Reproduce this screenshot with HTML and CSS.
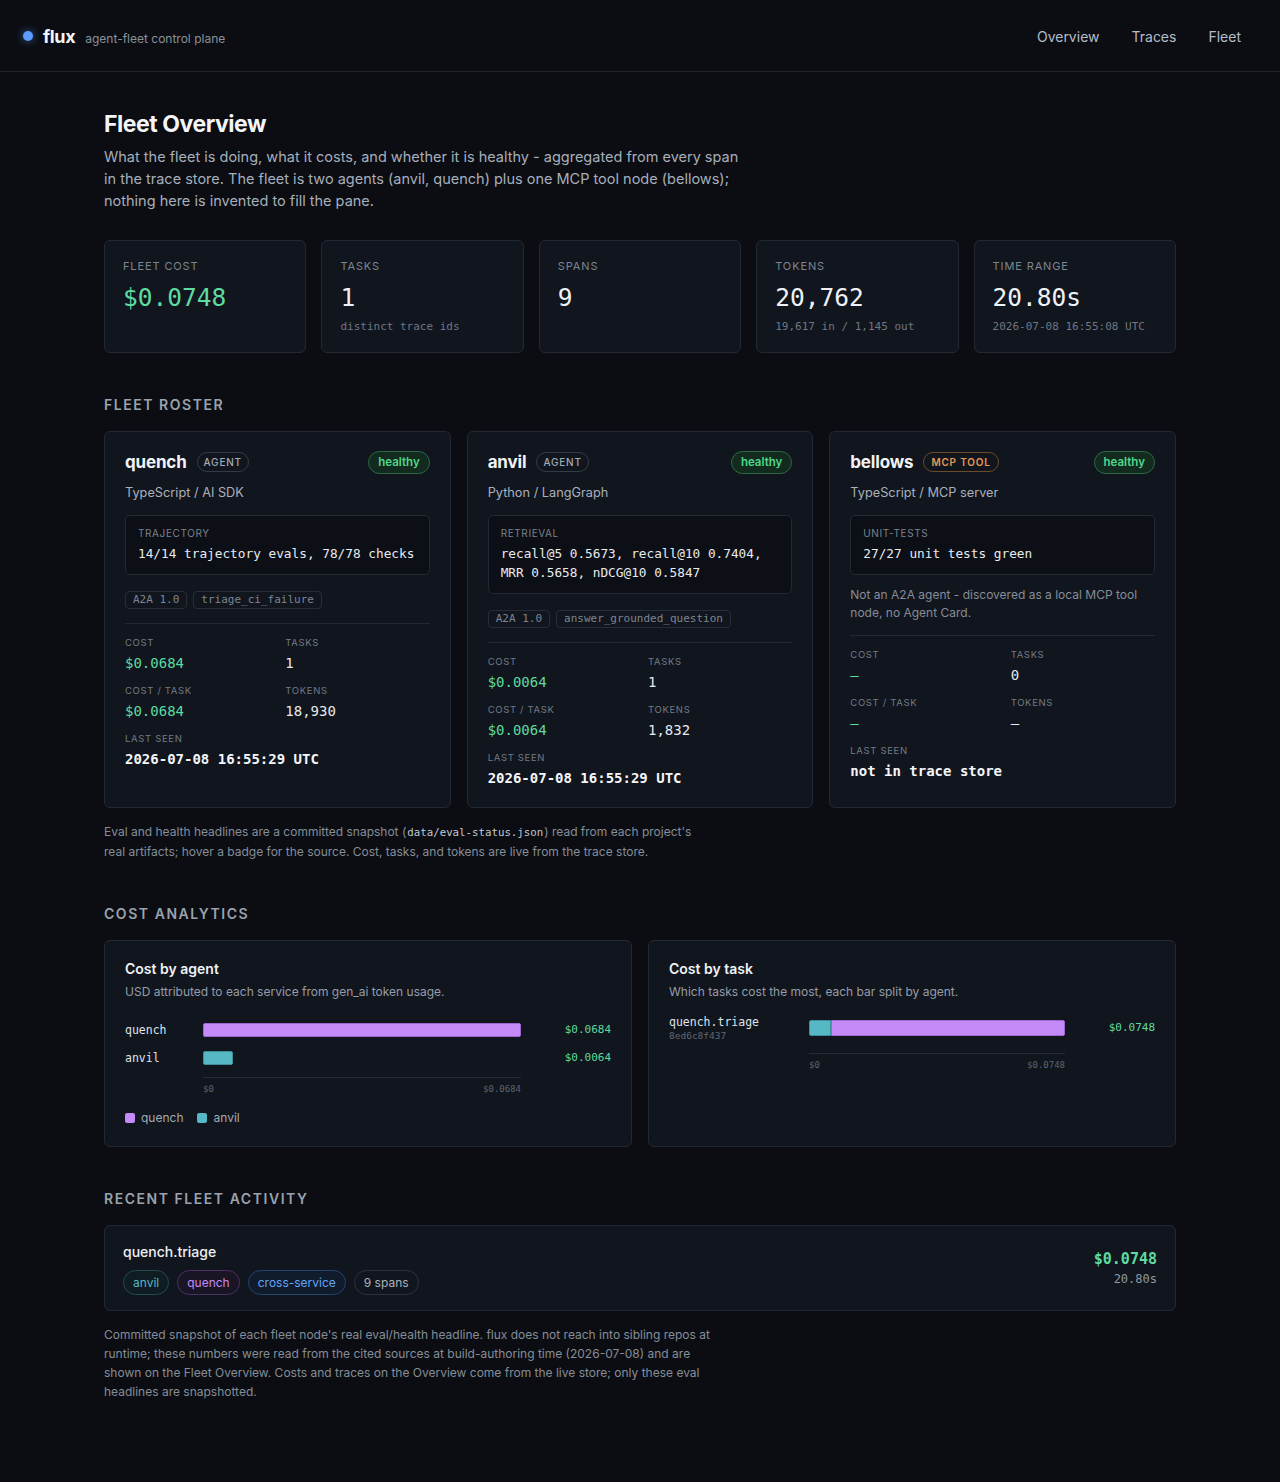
FILE: index.html
```html
<!DOCTYPE html>
<html>
<head>
    <title>flux - Fleet Overview</title>
    <link rel="stylesheet" href="styles.css">
</head>
<body>
    <header class="topbar">
        <div class="brand">
            <span class="brand-dot"></span>
            <span class="brand-name">flux</span>
            <span class="brand-sub">agent-fleet control plane</span>
        </div>
        <nav class="nav">
            <a href="#">Overview</a>
            <a href="#">Traces</a>
            <a href="#">Fleet</a>
        </nav>
    </header>

    <main class="page">
        <h1>Fleet Overview</h1>
        <p class="lede">What the fleet is doing, what it costs, and whether it is healthy - aggregated from every span in the trace store. The fleet is two agents (anvil, quench) plus one MCP tool node (bellows); nothing here is invented to fill the pane.</p>

        <div class="stats">
            <div class="stat">
                <div class="stat-label">Fleet cost</div>
                <div class="stat-value money">$0.0748</div>
            </div>
            <div class="stat">
                <div class="stat-label">Tasks</div>
                <div class="stat-value">1</div>
                <div class="stat-sub">distinct trace ids</div>
            </div>
            <div class="stat">
                <div class="stat-label">Spans</div>
                <div class="stat-value">9</div>
            </div>
            <div class="stat">
                <div class="stat-label">Tokens</div>
                <div class="stat-value">20,762</div>
                <div class="stat-sub">19,617 in / 1,145 out</div>
            </div>
            <div class="stat">
                <div class="stat-label">Time range</div>
                <div class="stat-value">20.80s</div>
                <div class="stat-sub">2026-07-08 16:55:08 UTC</div>
            </div>
        </div>

        <h2 class="section-title">Fleet roster</h2>
        <div class="roster">
            <div class="node-card">
                <div class="node-head">
                    <span class="node-name">quench</span>
                    <span class="kind">Agent</span>
                    <span class="health">healthy</span>
                </div>
                <div class="node-stack">TypeScript / AI SDK</div>
                <div class="eval-box">
                    <div class="eval-label">Trajectory</div>
                    <div class="eval-value">14/14 trajectory evals, 78/78 checks</div>
                </div>
                <div class="tags">
                    <span class="tag">A2A 1.0</span>
                    <span class="tag">triage_ci_failure</span>
                </div>
                <div class="node-stats">
                    <div><div class="cell-label">Cost</div><div class="cell-value money">$0.0684</div></div>
                    <div><div class="cell-label">Tasks</div><div class="cell-value">1</div></div>
                    <div><div class="cell-label">Cost / task</div><div class="cell-value money">$0.0684</div></div>
                    <div><div class="cell-label">Tokens</div><div class="cell-value">18,930</div></div>
                    <div class="wide"><div class="cell-label">Last seen</div><div class="cell-value strong">2026-07-08 16:55:29 UTC</div></div>
                </div>
            </div>

            <div class="node-card">
                <div class="node-head">
                    <span class="node-name">anvil</span>
                    <span class="kind">Agent</span>
                    <span class="health">healthy</span>
                </div>
                <div class="node-stack">Python / LangGraph</div>
                <div class="eval-box">
                    <div class="eval-label">Retrieval</div>
                    <div class="eval-value">recall@5 0.5673, recall@10 0.7404, MRR 0.5658, nDCG@10 0.5847</div>
                </div>
                <div class="tags">
                    <span class="tag">A2A 1.0</span>
                    <span class="tag">answer_grounded_question</span>
                </div>
                <div class="node-stats">
                    <div><div class="cell-label">Cost</div><div class="cell-value money">$0.0064</div></div>
                    <div><div class="cell-label">Tasks</div><div class="cell-value">1</div></div>
                    <div><div class="cell-label">Cost / task</div><div class="cell-value money">$0.0064</div></div>
                    <div><div class="cell-label">Tokens</div><div class="cell-value">1,832</div></div>
                    <div class="wide"><div class="cell-label">Last seen</div><div class="cell-value strong">2026-07-08 16:55:29 UTC</div></div>
                </div>
            </div>

            <div class="node-card">
                <div class="node-head">
                    <span class="node-name">bellows</span>
                    <span class="kind tool">MCP tool</span>
                    <span class="health">healthy</span>
                </div>
                <div class="node-stack">TypeScript / MCP server</div>
                <div class="eval-box">
                    <div class="eval-label">Unit-tests</div>
                    <div class="eval-value">27/27 unit tests green</div>
                </div>
                <p class="node-note">Not an A2A agent - discovered as a local MCP tool node, no Agent Card.</p>
                <div class="node-stats">
                    <div><div class="cell-label">Cost</div><div class="cell-value money">&ndash;</div></div>
                    <div><div class="cell-label">Tasks</div><div class="cell-value">0</div></div>
                    <div><div class="cell-label">Cost / task</div><div class="cell-value money">&ndash;</div></div>
                    <div><div class="cell-label">Tokens</div><div class="cell-value">&ndash;</div></div>
                    <div class="wide"><div class="cell-label">Last seen</div><div class="cell-value strong">not in trace store</div></div>
                </div>
            </div>
        </div>
        <p class="footnote">Eval and health headlines are a committed snapshot (<code>data/eval-status.json</code>) read from each project's real artifacts; hover a badge for the source. Cost, tasks, and tokens are live from the trace store.</p>

        <h2 class="section-title">Cost analytics</h2>
        <div class="charts">
            <div class="chart-card">
                <div class="chart-title">Cost by agent</div>
                <div class="chart-sub">USD attributed to each service from gen_ai token usage.</div>
                <div class="bars">
                    <div class="bar-row agent-row">
                        <span class="bar-label">quench</span>
                        <div class="bar-track"><div class="bar quench" style="width: 100%"></div></div>
                        <span class="bar-value">$0.0684</span>
                    </div>
                    <div class="bar-row agent-row">
                        <span class="bar-label">anvil</span>
                        <div class="bar-track"><div class="bar anvil" style="width: 9.36%"></div></div>
                        <span class="bar-value">$0.0064</span>
                    </div>
                    <div class="bar-row agent-row axis-row">
                        <span></span>
                        <div class="axis"><span>$0</span><span>$0.0684</span></div>
                        <span></span>
                    </div>
                </div>
                <div class="legend">
                    <span class="legend-item"><span class="swatch quench"></span>quench</span>
                    <span class="legend-item"><span class="swatch anvil"></span>anvil</span>
                </div>
            </div>

            <div class="chart-card">
                <div class="chart-title">Cost by task</div>
                <div class="chart-sub">Which tasks cost the most, each bar split by agent.</div>
                <div class="bars task-bars">
                    <div class="bar-row task-row">
                        <div class="task-label">
                            <div class="bar-label">quench.triage</div>
                            <div class="task-id">8ed6c8f437</div>
                        </div>
                        <div class="bar-track split">
                            <div class="bar anvil" style="width: 8.56%"></div>
                            <div class="bar quench" style="width: 91.44%"></div>
                        </div>
                        <span class="bar-value">$0.0748</span>
                    </div>
                    <div class="bar-row task-row axis-row">
                        <span></span>
                        <div class="axis"><span>$0</span><span>$0.0748</span></div>
                        <span></span>
                    </div>
                </div>
            </div>
        </div>

        <h2 class="section-title">Recent fleet activity</h2>
        <div class="activity">
            <div class="activity-main">
                <div class="activity-name">quench.triage</div>
                <div class="pills">
                    <span class="pill pill-anvil">anvil</span>
                    <span class="pill pill-quench">quench</span>
                    <span class="pill pill-cross">cross-service</span>
                    <span class="pill">9 spans</span>
                </div>
            </div>
            <div class="activity-side">
                <div class="activity-cost">$0.0748</div>
                <div class="activity-time">20.80s</div>
            </div>
        </div>

        <p class="footnote closing">Committed snapshot of each fleet node's real eval/health headline. flux does not reach into sibling repos at runtime; these numbers were read from the cited sources at build-authoring time (2026-07-08) and are shown on the Fleet Overview. Costs and traces on the Overview come from the live store; only these eval headlines are snapshotted.</p>
    </main>
</body>
</html>
```

FILE: styles.css
```css
body {
    margin: 0;
    background-color: #0b0d12;
    color: #e6e9ee;
    font-family: Inter, "Noto Sans", sans-serif;
}

.topbar {
    box-sizing: border-box;
    height: 72px;
    border-bottom: 1px solid #1f242d;
    display: flex;
    align-items: center;
    justify-content: space-between;
    padding: 1px 39px 0 23px;
}

.brand {
    display: flex;
    align-items: baseline;
}

.brand-dot {
    align-self: center;
    width: 10px;
    height: 10px;
    border-radius: 50%;
    background-color: #5b9dff;
    box-shadow: 0 0 8px rgba(91, 157, 255, 0.6);
    margin-right: 10px;
}

.brand-name {
    font-size: 18px;
    font-weight: 700;
    color: #f3f5f8;
    letter-spacing: -0.02em;
    margin-right: 10px;
}

.brand-sub {
    font-size: 12px;
    color: #8a919c;
}

.nav {
    display: flex;
    gap: 32px;
}

.nav a {
    color: #b5bdc9;
    text-decoration: none;
    font-size: 14px;
}

.page {
    max-width: 1072px;
    margin: 0 auto;
    padding: 37px 0 80px;
}

h1 {
    margin: 0;
    font-size: 23px;
    line-height: 30px;
    font-weight: 700;
    letter-spacing: -0.02em;
    color: #f3f5f8;
}

.lede {
    margin: 7px 0 0;
    max-width: 645px;
    font-size: 14.5px;
    line-height: 22px;
    color: #a7afbb;
}

.money {
    color: #5edba0 !important;
}

/* stat strip */

.stats {
    display: grid;
    grid-template-columns: repeat(5, 1fr);
    gap: 15px;
    margin-top: 28px;
}

.stat {
    background-color: #11151d;
    border: 1px solid #232934;
    border-radius: 6px;
    padding: 17px 18px 16px;
    min-height: 78px;
}

.stat-label {
    font-size: 11px;
    line-height: 16px;
    letter-spacing: 0.08em;
    text-transform: uppercase;
    color: #7d8592;
}

.stat-value {
    margin-top: 9px;
    font-family: "DejaVu Sans Mono", monospace;
    font-size: 24.5px;
    line-height: 30px;
    color: #eef1f5;
}

.stat-sub {
    margin-top: 6px;
    font-family: "DejaVu Sans Mono", monospace;
    font-size: 11px;
    line-height: 16px;
    color: #6f7783;
}

.section-title {
    margin: 42px 0 16px;
    font-size: 14px;
    line-height: 20px;
    font-weight: 600;
    letter-spacing: 0.11em;
    text-transform: uppercase;
    color: #9aa2ae;
}

/* roster */

.roster {
    display: grid;
    grid-template-columns: repeat(3, 1fr);
    gap: 16px;
}

.node-card {
    background-color: #11151d;
    border: 1px solid #232934;
    border-radius: 6px;
    padding: 18px 20px 19px;
}

.node-head {
    display: flex;
    align-items: center;
    height: 24px;
}

.node-name {
    font-size: 17px;
    font-weight: 700;
    color: #f1f3f6;
    letter-spacing: -0.01em;
}

.kind {
    margin-left: 10px;
    height: 18px;
    line-height: 18px;
    padding: 0 6px;
    border: 1px solid #343b47;
    border-radius: 10px;
    font-size: 10px;
    font-weight: 500;
    letter-spacing: 0.08em;
    text-transform: uppercase;
    color: #a3abb7;
}

.kind.tool {
    border-color: #6c4a2c;
    color: #e39a55;
    font-weight: 600;
    padding: 0 7px;
}

.health {
    margin-left: auto;
    height: 21px;
    line-height: 21px;
    padding: 0 9px;
    border: 1px solid #2a6a47;
    border-radius: 12px;
    background-color: #132a1f;
    font-size: 11.5px;
    font-weight: 600;
    color: #4fd98a;
}

.node-stack {
    margin-top: 9px;
    font-size: 12.75px;
    line-height: 20px;
    color: #a9b1bc;
}

.eval-box {
    margin-top: 12px;
    background-color: #0c0f15;
    border: 1px solid #232934;
    border-radius: 5px;
    padding: 10px 12px 11px;
}

.eval-label {
    font-size: 10px;
    line-height: 14px;
    letter-spacing: 0.06em;
    text-transform: uppercase;
    color: #7a828e;
}

.eval-value {
    margin-top: 4px;
    font-family: "DejaVu Sans Mono", monospace;
    font-size: 12.75px;
    line-height: 19px;
    color: #e8ebf0;
}

.tags {
    display: flex;
    gap: 6px;
    margin-top: 16px;
}

.tag {
    font-family: "DejaVu Sans Mono", monospace;
    font-size: 11px;
    line-height: 16px;
    padding: 0 7px;
    border: 1px solid #272d38;
    border-radius: 4px;
    color: #7d8592;
}

.node-note {
    margin: 11px 0 0;
    font-size: 12px;
    line-height: 18px;
    color: #858d99;
}

.node-stats {
    display: grid;
    grid-template-columns: 1fr 1fr;
    column-gap: 16px;
    row-gap: 11px;
    margin-top: 14px;
    padding-top: 12px;
    border-top: 1px solid #232934;
}

.node-note + .node-stats {
    margin-top: 13px;
}

.node-stats .wide {
    grid-column: span 2;
}

.cell-label {
    font-size: 9.5px;
    line-height: 14px;
    letter-spacing: 0.07em;
    text-transform: uppercase;
    color: #737b87;
}

.cell-value {
    margin-top: 3px;
    font-family: "DejaVu Sans Mono", monospace;
    font-size: 14px;
    line-height: 20px;
    color: #e6e9ee;
}

.cell-value.strong {
    color: #f4f6f9;
    font-weight: 600;
}

.footnote {
    margin: 14px 0 0;
    max-width: 600px;
    font-size: 12px;
    line-height: 19.3px;
    color: #858d99;
}

.footnote code {
    font-family: "DejaVu Sans Mono", monospace;
    font-size: 10.75px;
    margin: 0 1px;
    color: #c3c9d2;
}

/* charts */

.charts {
    display: grid;
    grid-template-columns: 1fr 1fr;
    gap: 16px;
}

.chart-card {
    background-color: #11151d;
    border: 1px solid #232934;
    border-radius: 6px;
    padding: 18px 20px 19px;
}

.chart-title {
    font-size: 14px;
    line-height: 20px;
    font-weight: 600;
    color: #eef1f5;
}

.chart-sub {
    margin-top: 4px;
    font-size: 12px;
    line-height: 18px;
    color: #959daa;
}

.bars {
    display: flex;
    flex-direction: column;
    gap: 8px;
    margin-top: 19px;
}

.bars.task-bars {
    margin-top: 13px;
}

.bar-row {
    display: grid;
    align-items: center;
    min-height: 20px;
}

.agent-row {
    grid-template-columns: 78px 1fr 90px;
}

.task-row {
    grid-template-columns: 140px 1fr 90px;
}

.bar-label {
    font-family: "DejaVu Sans Mono", monospace;
    font-size: 11.5px;
    line-height: 16px;
    color: #dfe3e9;
}

.task-id {
    font-family: "DejaVu Sans Mono", monospace;
    font-size: 9.5px;
    line-height: 12px;
    color: #5f6773;
}

.bar-track {
    display: flex;
    height: 14px;
}

.bar-track.split {
    height: 16px;
}

.bar {
    height: 100%;
    border-radius: 2px;
    box-sizing: border-box;
}

.bar.quench {
    background-color: #c58af9;
    border: 1px solid #9d68d4;
}

.bar.anvil {
    background-color: #56b8c4;
    border: 1px solid #3f8f99;
}

.split .bar.anvil {
    border-radius: 2px 0 0 2px;
}

.split .bar.quench {
    border-radius: 0 2px 2px 0;
}

.bar-value {
    text-align: right;
    font-family: "DejaVu Sans Mono", monospace;
    font-size: 11px;
    color: #5edba0;
}

.bars .axis-row {
    min-height: 0;
    margin-top: 1px;
}

.task-bars .axis-row {
    margin-top: 3px;
}

.axis {
    display: flex;
    justify-content: space-between;
    border-top: 1px solid #262c37;
    padding-top: 5px;
    font-family: "DejaVu Sans Mono", monospace;
    font-size: 9px;
    line-height: 12px;
    color: #5c646f;
}

.legend {
    display: flex;
    gap: 14px;
    margin-top: 14px;
}

.legend-item {
    display: flex;
    align-items: center;
    gap: 6px;
    font-size: 12px;
    line-height: 18px;
    color: #a3abb7;
}

.swatch {
    width: 10px;
    height: 10px;
    border-radius: 2px;
}

.swatch.quench {
    background-color: #c58af9;
}

.swatch.anvil {
    background-color: #56b8c4;
}

/* activity */

.activity {
    display: flex;
    justify-content: space-between;
    align-items: center;
    background-color: #11151d;
    border: 1px solid #232934;
    border-radius: 6px;
    padding: 16px 18px 15px;
}

.activity-name {
    font-size: 14px;
    line-height: 20px;
    font-weight: 500;
    color: #eef1f5;
}

.pills {
    display: flex;
    gap: 8px;
    margin-top: 8px;
}

.pill {
    height: 23px;
    line-height: 23px;
    padding: 0 9px;
    border: 1px solid #2c323d;
    border-radius: 13px;
    font-size: 12px;
    color: #aab2be;
}

.pill-anvil {
    color: #56b8c4;
    border-color: #1f4b51;
    background-color: #0f1c21;
}

.pill-quench {
    color: #c58af9;
    border-color: #4a3166;
    background-color: #1a1525;
}

.pill-cross {
    color: #64a6f8;
    border-color: #22446f;
    background-color: #101b2b;
}

.activity-side {
    text-align: right;
    font-family: "DejaVu Sans Mono", monospace;
}

.activity-cost {
    font-size: 15px;
    line-height: 20px;
    font-weight: 600;
    color: #5edba0;
}

.activity-time {
    margin-top: 2px;
    font-size: 12px;
    line-height: 16px;
    color: #8f97a3;
}

.footnote.closing {
    margin-top: 14px;
    max-width: 610px;
}
```
